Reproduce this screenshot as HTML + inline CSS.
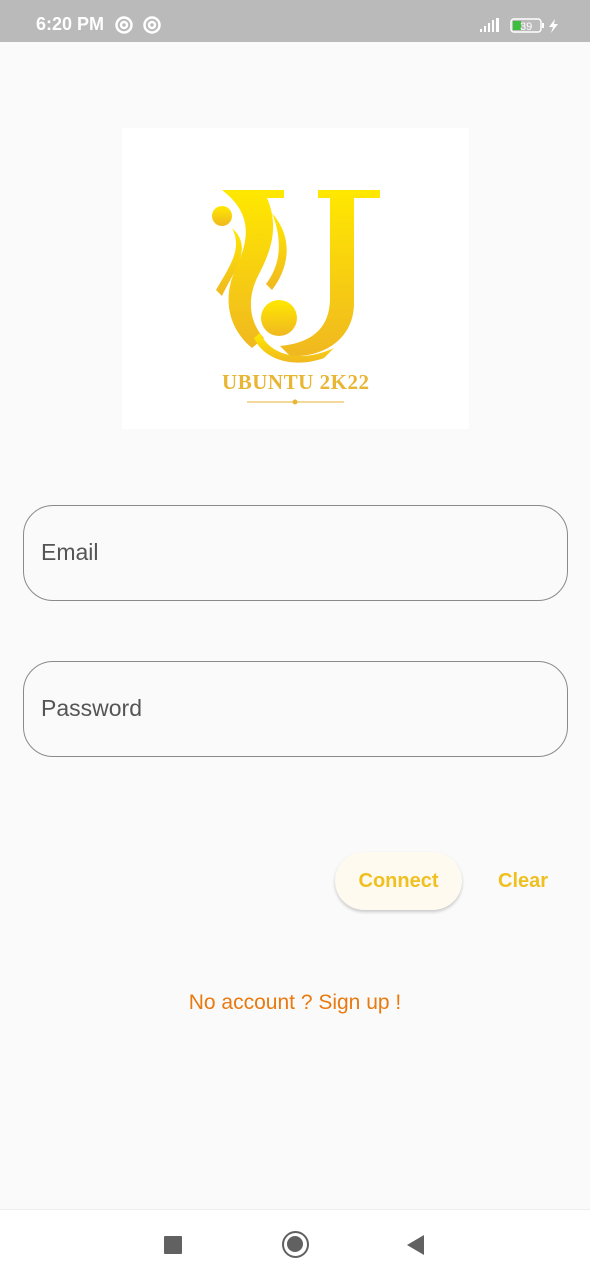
<!DOCTYPE html>
<html><head><meta charset="utf-8"><style>
*{margin:0;padding:0;box-sizing:border-box}
body{width:590px;height:1280px;background:#fafafa;font-family:"Liberation Sans",Roboto,sans-serif;position:relative;overflow:hidden}
.sb{position:absolute;top:0;left:0;width:590px;height:42px;background:#bababa;color:#fff}
.field{position:absolute;left:23px;width:545px;height:96px;border:1.5px solid #8a8a8a;border-radius:30px;font-size:23px;color:#555;padding-left:17px;line-height:93px}
</style></head><body>
<div class="sb">
<div style="position:absolute;left:36px;top:14px;font-size:18px;font-weight:bold">6:20 PM</div>
<svg style="position:absolute;left:114px;top:15px" width="50" height="20"><g fill="none" stroke="#fff" stroke-width="2.5"><circle cx="10" cy="10" r="7.5"/><circle cx="10" cy="10" r="3"/><circle cx="38" cy="10" r="7.5"/><circle cx="38" cy="10" r="3"/></g></svg>
<svg style="position:absolute;left:478px;top:17px" width="90" height="18"><g fill="#fff"><rect x="2" y="12" width="2" height="3"/><rect x="6" y="9" width="2" height="6"/><rect x="10" y="6" width="2" height="9"/><rect x="14" y="3" width="2" height="12"/><rect x="18" y="1" width="3" height="14"/></g><rect x="33" y="2" width="30" height="13" rx="3" fill="none" stroke="#fff" stroke-width="1.5"/><rect x="35" y="4" width="8" height="9" fill="#3cbf3c"/><text x="42" y="13" font-size="11" fill="#fff" font-family="Liberation Sans">39</text><rect x="64" y="6" width="2" height="5" fill="#fff"/><path d="M77 2 L71 10 L75 10 L73 16 L80 7 L76 7 Z" fill="#fff"/></svg>
</div>
<div style="position:absolute;left:122px;top:128px;width:347px;height:301px;background:#fff">
<svg width="347" height="301" viewBox="0 0 347 301">
<defs><linearGradient id="g" x1="0" y1="0" x2="0" y2="1"><stop offset="0" stop-color="#ffe800"/><stop offset="1" stop-color="#f0b820"/></linearGradient></defs>
<g fill="url(#g)">
<path d="M100 62 L162 62 L162 70 L145 70 C158 100 148 125 136 148 C124 172 128 195 142 210 L130 220 C106 200 100 170 114 140 C128 110 130 85 100 62 Z"/>
<path d="M196 62 L258 62 L258 70 L232 70 L232 175 C232 212 200 230 168 228 L158 218 C190 215 208 200 208 170 L208 70 L196 70 Z"/>
<circle cx="157" cy="190" r="18"/>
<circle cx="100" cy="88" r="10"/>
<path d="M110 100 C132 120 112 142 100 168 L94 162 C110 135 120 120 110 100 Z"/>
<path d="M150 85 C172 110 167 140 150 162 L144 156 C160 135 160 110 150 85 Z"/>
<path d="M138 205 C150 230 182 234 212 220 L202 230 C175 240 143 234 132 210 Z"/>
</g>
<text x="173.5" y="261" text-anchor="middle" font-family="Liberation Serif" font-weight="bold" font-size="21" textLength="147" fill="#e9b634">UBUNTU 2K22</text>
<line x1="125" y1="274" x2="222" y2="274" stroke="#e9b634" stroke-width="1"/>
<circle cx="173" cy="274" r="2.5" fill="#e9b634"/>
</svg></div>
<div class="field" style="top:505px">Email</div>
<div class="field" style="top:661px">Password</div>
<div style="position:absolute;left:335px;top:852px;width:127px;height:58px;border-radius:29px;background:#fffaf0;box-shadow:0 2px 3px rgba(0,0,0,.2);color:#f0c020;font-weight:bold;font-size:20px;text-align:center;line-height:58px">Connect</div>
<div style="position:absolute;left:498px;top:852px;line-height:58px;color:#f0c020;font-weight:bold;font-size:20px">Clear</div>
<div style="position:absolute;left:0;width:590px;top:991px;text-align:center;color:#e87a10;font-size:21px">No account ? Sign up !</div>
<div style="position:absolute;left:0;top:1209px;width:590px;height:71px;background:#fff;border-top:1px solid #eee"></div>
<div style="position:absolute;left:164px;top:1236px;width:18px;height:18px;background:#616161;border-radius:1px"></div>
<div style="position:absolute;left:282px;top:1231px;width:27px;height:27px;border:2.5px solid #616161;border-radius:50%"><div style="margin:3px;width:16px;height:16px;border-radius:50%;background:#616161"></div></div>
<svg style="position:absolute;left:406px;top:1234px" width="20" height="22"><path d="M18 1 L18 21 L1 11 Z" fill="#616161"/></svg>
</body></html>
